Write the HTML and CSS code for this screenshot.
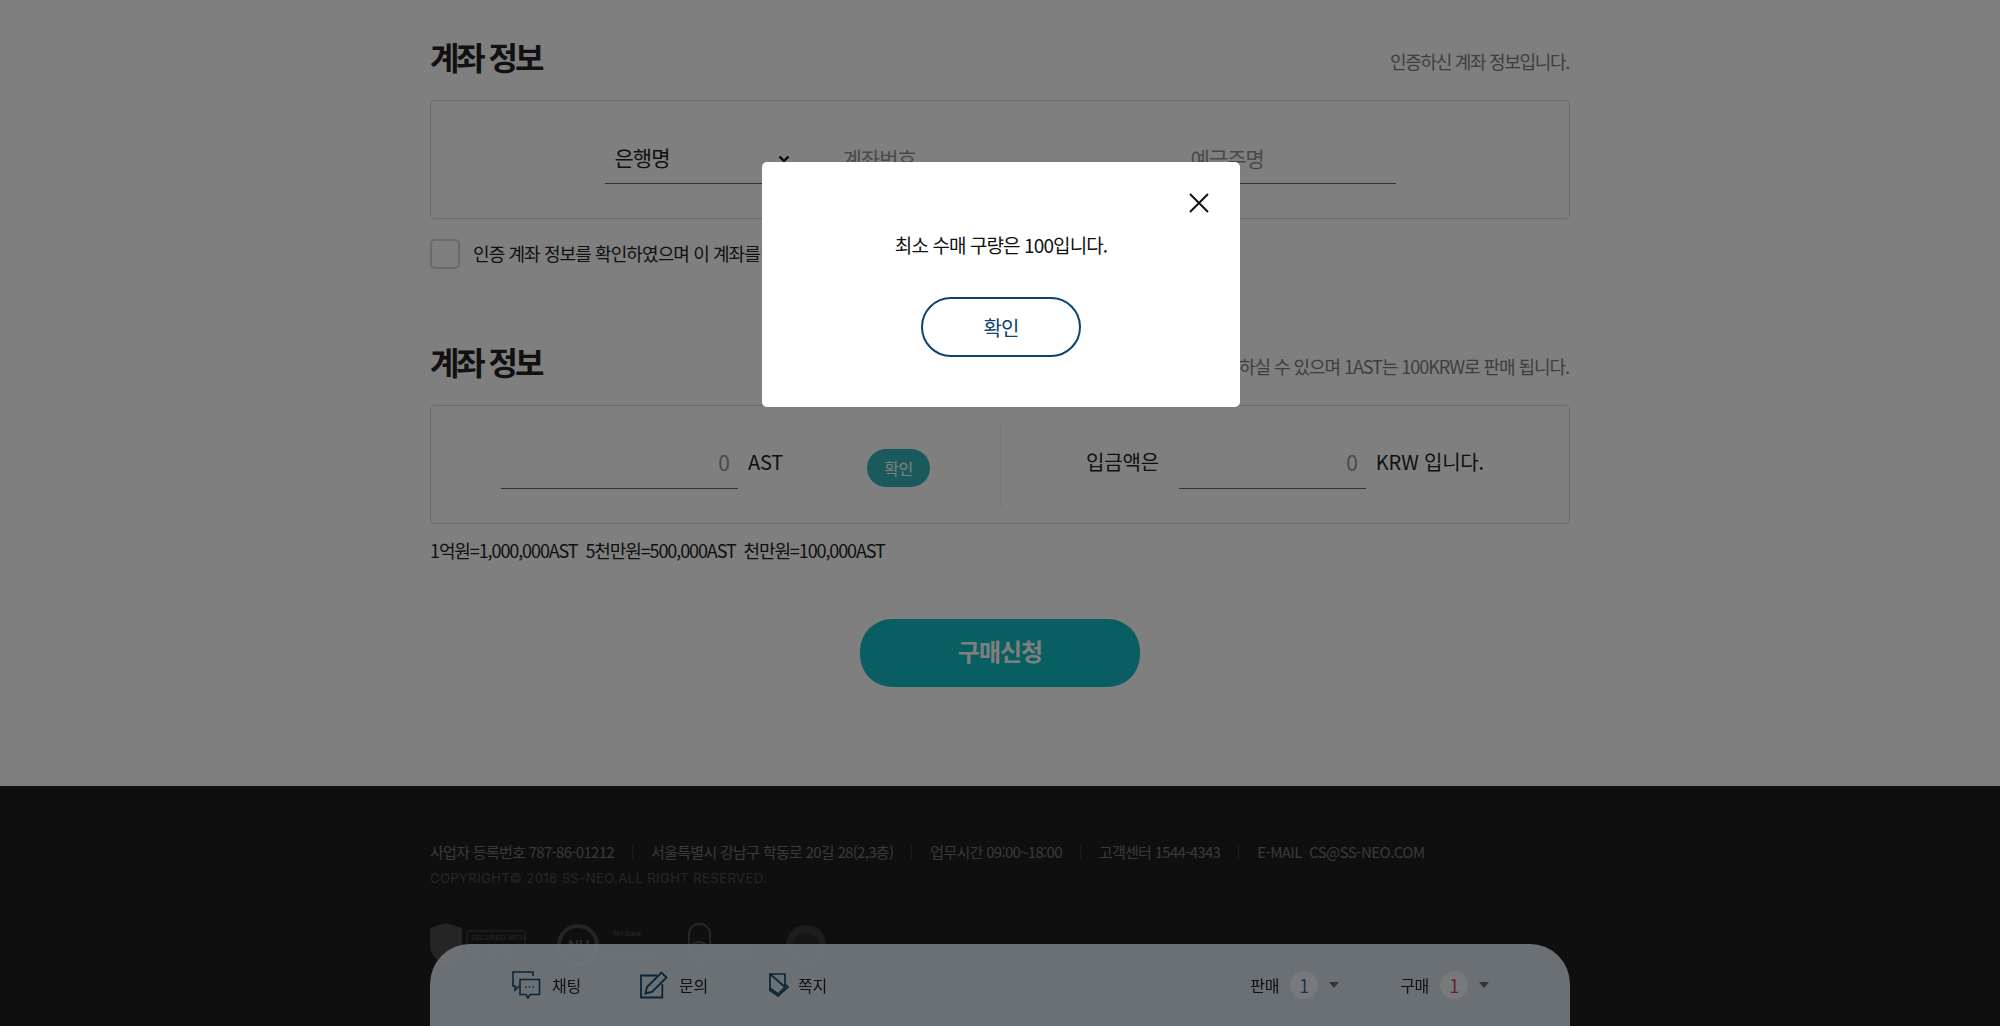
FILE: index.html
```html
<!DOCTYPE html>
<html lang="ko">
<head>
    <meta charset="UTF-8">
    <meta name="viewport" content="width=device-width, initial-scale=1.0">
    <title>계좌 정보</title>
    <link rel="stylesheet" href="styles.css">
</head>
<body>
    <main class="wrap">
        <div class="section-head">
            <h2>계좌 정보</h2>
            <p class="note-first">인증하신 계좌 정보입니다.</p>
        </div>
        <div class="box account-row">
            <select class="bank-select">
                <option>은행명</option>
            </select>
            <input class="field account-no" type="text" placeholder="계좌번호">
            <input class="field account-name" type="text" placeholder="예금주명">
        </div>
        <label class="agree">
            <span class="check"></span>
            <span class="agree-text">인증 계좌 정보를 확인하였으며 이 계좌를 통하여</span>
        </label>

        <div class="section-head second">
            <h2>계좌 정보</h2>
            <p class="note-second">최소 100AST 이상 구매 하실 수 있으며 1AST는 100KRW로 판매 됩니다.</p>
        </div>
        <div class="box amount-row">
            <div class="half left">
                <input class="field amount-ast" type="text" placeholder="0">
                <span class="unit">AST</span>
                <button class="small-btn" type="button">확인</button>
            </div>
            <div class="half right">
                <span class="deposit-label">입금액은</span>
                <input class="field amount-krw" type="text" placeholder="0">
                <span class="unit">KRW 입니다.</span>
            </div>
        </div>
        <p class="rates">1억원=1,000,000AST&nbsp; 5천만원=500,000AST&nbsp; 천만원=100,000AST</p>
        <div class="submit-row">
            <button class="submit-btn" type="button">구매신청</button>
        </div>
    </main>

    <footer class="site-footer">
        <div class="footer-inner">
            <ul class="info">
                <li>사업자 등록번호 787-86-01212</li>
                <li>서울특별시 강남구 학동로 20길 28(2,3층)</li>
                <li>업무시간 09:00~18:00</li>
                <li>고객센터 1544-4343</li>
                <li>E-MAIL&nbsp; CS@SS-NEO.COM</li>
            </ul>
            <p class="copyright">COPYRIGHT© 2018 SS-NEO.ALL RIGHT RESERVED.</p>
            <div class="logos">
                <svg class="logo-bitgo" width="96" height="44" viewBox="0 0 96 44">
                    <path d="M16 0 L32 5 V22 C32 32 24 39 16 43 C8 39 0 32 0 22 V5 Z" fill="#4a4a4a"/>
                    <rect x="37" y="8" width="58" height="30" rx="2" fill="none" stroke="#4a4a4a"/>
                    <text x="41" y="17" class="logo-small">SECURED WITH</text>
                    <text x="41" y="33" class="logo-big">BitGo</text>
                </svg>
                <svg class="logo-nh" width="100" height="44" viewBox="0 0 100 44">
                    <circle cx="21" cy="22" r="19" fill="none" stroke="#4a4a4a" stroke-width="4"/>
                    <text x="11" y="27" class="logo-big">NH</text>
                    <text x="56" y="13" class="logo-small">NH Bank</text>
                    <rect x="47" y="27" width="50" height="10" fill="#3c3c3c"/>
                </svg>
                <svg class="logo-lock" width="66" height="44" viewBox="0 0 66 44">
                    <rect x="1" y="1" width="21" height="30" rx="10" fill="none" stroke="#4a4a4a" stroke-width="2"/>
                    <circle cx="11" cy="30" r="11" fill="none" stroke="#4a4a4a" stroke-width="2"/>
                    <rect x="26" y="24" width="38" height="16" fill="#3c3c3c"/>
                </svg>
                <svg class="logo-seal" width="42" height="44" viewBox="0 0 42 44">
                    <circle cx="21" cy="22" r="20" fill="#3a3a3a"/>
                    <circle cx="21" cy="24" r="14" fill="#2c2c2c"/>
                </svg>
            </div>
        </div>
    </footer>

    <nav class="quick-bar">
        <div class="quick-links">
            <a class="quick-link">
                <svg width="29" height="28" viewBox="0 0 29 28" fill="none" stroke="#164b70" stroke-width="1.6">
                    <path d="M21 5 V1 H1 V15 H3 V19 L7 15"/>
                    <path d="M8 8.5 H27.5 V23.5 H18 L16 27 L14 23.5 H8 Z"/>
                    <path d="M13 16 H14.4 M16.8 16 H18.2 M20.6 16 H22" stroke-width="1.4"/>
                </svg>
                채팅
            </a>
            <a class="quick-link">
                <svg width="28" height="28" viewBox="0 0 28 28" fill="none" stroke="#164b70" stroke-width="1.8">
                    <path d="M17 4.5 H1 V26.5 H22.3 V13"/>
                    <path d="M5.5 22.5 L7 16 L21.5 1.5 L26.5 6.5 L12 21 Z"/>
                </svg>
                문의
            </a>
            <a class="quick-link note-link">
                <svg width="20" height="24" viewBox="0 0 20 24" fill="none" stroke="#164b70" stroke-width="1.7">
                    <path d="M1 1 H16 V14 L9 21 L1 15 Z"/>
                    <path d="M1 1 L16 14"/>
                    <path d="M1 15 L0.5 17 L9 23 L19 14 L16 11"/>
                </svg>
                쪽지
            </a>
        </div>
        <div class="trades">
            <div class="trade"><span>판매</span><b class="count sell">1</b><i class="caret"></i></div>
            <div class="trade"><span>구매</span><b class="count buy">1</b><i class="caret"></i></div>
        </div>
    </nav>

    <div class="dim">
        <div class="modal">
            <button class="modal-close" type="button" aria-label="닫기">
                <svg width="20" height="20" viewBox="0 0 20 20" stroke="#111" stroke-width="2">
                    <path d="M1 1 L19 19 M19 1 L1 19"/>
                </svg>
            </button>
            <p class="modal-text">최소 수매 구량은 100입니다.</p>
            <button class="modal-ok" type="button">확인</button>
        </div>
    </div>
</body>
</html>
```

FILE: styles.css
```css
* {
    box-sizing: border-box;
}
html, body {
    height: 100%;
    overflow: hidden;
}
body {
    margin: 0;
    font-family: "Noto Sans CJK KR", "Noto Sans", sans-serif;
    font-size: 18px;
    color: #222;
    background-color: #fff;
}
button, input, select {
    font-family: inherit;
}
.wrap {
    width: 1140px;
    margin: 0 auto;
    padding-top: 36px;
    padding-bottom: 99px;
}

/* section titles */
.section-head {
    display: flex;
    justify-content: space-between;
    align-items: flex-end;
    height: 44px;
    margin-bottom: 20px;
}
.section-head.second {
    margin-top: 72px;
}
.section-head h2 {
    margin: 0 0 4px;
    font-size: 32px;
    line-height: 40px;
    font-weight: 700;
    letter-spacing: -3.1px;
}
.section-head p {
    margin: 0 1px 6px 0;
    font-size: 18px;
    line-height: 26px;
    color: #7c7c7c;
    white-space: nowrap;
}
.note-first {
    letter-spacing: -1.3px;
}
.note-second {
    letter-spacing: -1.05px;
}
.box {
    height: 119px;
    border: 1px solid #d6d6d6;
    border-radius: 5px;
}

/* account row */
.account-row {
    display: flex;
    justify-content: center;
    align-items: center;
}
.field {
    height: 49px;
    padding: 0 10px 3px;
    border: none;
    border-bottom: 1px solid #666;
    border-radius: 0;
    background: none;
    font-size: 21px;
    color: #222;
    outline: none;
    letter-spacing: -1px;
}
.field::placeholder {
    color: #949494;
}
.bank-select {
    width: 190px;
    height: 49px;
    margin-right: 38px;
    padding: 0 9px 4px 10px;
    border: none;
    border-bottom: 1px solid #666;
    border-radius: 0;
    appearance: none;
    background: url("data:image/svg+xml,%3Csvg xmlns='http://www.w3.org/2000/svg' width='12' height='8' viewBox='0 0 12 8'%3E%3Cpath d='M1.5 1.5 L6 6 L10.5 1.5' fill='none' stroke='%23111' stroke-width='2.4'/%3E%3C/svg%3E") no-repeat right 5px center;
    font-size: 21px;
    color: #222;
    letter-spacing: -1px;
}
.account-no {
    width: 337px;
    margin-right: 11px;
}
.account-name {
    width: 215px;
}
.agree {
    display: flex;
    align-items: center;
    margin-top: 20px;
    height: 30px;
    letter-spacing: -0.9px;
    line-height: 30px;
    white-space: nowrap;
}
.agree-text {
    margin-top: -2px;
}
.check {
    width: 30px;
    height: 30px;
    margin-right: 13px;
    border: 2px solid #d4d4d4;
    border-radius: 5px;
}

/* amount row */
.amount-row {
    display: grid;
    grid-template-columns: 570px 1fr;
    align-items: center;
}
.half {
    display: flex;
    align-items: center;
    height: 85px;
}
.half.left {
    padding: 0 70px;
    border-right: 1px solid #ececec;
}
.half.right {
    justify-content: center;
}
.amount-row .field {
    text-align: right;
    padding-right: 9px;
    padding-bottom: 5px;
}
.amount-ast {
    width: 237px;
}
.amount-krw {
    width: 187px;
}
.unit,
.deposit-label {
    margin-top: -2px;
    padding-bottom: 5px;
    font-size: 20px;
    letter-spacing: -0.2px;
}
.unit {
    margin-left: 10px;
}
.deposit-label {
    margin-right: 20px;
}
.small-btn {
    width: 63px;
    height: 38px;
    margin-left: auto;
    margin-top: 7px;
    padding: 0;
    border: none;
    border-radius: 19px;
    background-color: #35b4b8;
    color: #fff;
    font-size: 16px;
    letter-spacing: -0.5px;
}
.rates {
    margin: 13px 0 0;
    line-height: 27px;
    letter-spacing: -1.1px;
    white-space: nowrap;
}
.submit-row {
    display: flex;
    justify-content: center;
    margin-top: 55px;
}
.submit-btn {
    width: 280px;
    height: 68px;
    padding: 0 0 5px;
    border: none;
    border-radius: 32px;
    background-color: #10bcc0;
    color: #fff;
    font-size: 24px;
    font-weight: 700;
    letter-spacing: -1px;
}

/* footer */
.site-footer {
    height: 240px;
    background-color: #1e1e1e;
    padding-top: 56px;
    overflow: hidden;
}
.footer-inner {
    width: 1140px;
    margin: 0 auto;
}
.info {
    display: flex;
    margin: 0;
    padding: 0;
    list-style: none;
    font-size: 15px;
    line-height: 20px;
    color: #747474;
    letter-spacing: -0.7px;
}
.info li {
    padding-right: 18px;
    margin-right: 18px;
    border-right: 1px solid #3c3c3c;
    height: 14px;
    line-height: 14px;
    margin-top: 3px;
}
.info li:last-child {
    border-right: none;
    letter-spacing: -0.55px;
}
.copyright {
    margin: 9px 0 0;
    font-family: "Inter", sans-serif;
    font-size: 13px;
    line-height: 20px;
    color: #4e4e4e;
    letter-spacing: 0.45px;
}
.logos {
    display: flex;
    gap: 31px;
    margin-top: 35px;
}
.logo-small {
    font-family: "Liberation Sans", sans-serif;
    font-size: 7px;
    fill: #555;
}
.logo-big {
    font-family: "Liberation Sans", sans-serif;
    font-size: 15px;
    font-weight: 700;
    fill: #555;
}

/* quick bar fixed on the bottom */
.quick-bar {
    position: fixed;
    left: 430px;
    bottom: 0;
    width: 1140px;
    height: 82px;
    display: flex;
    justify-content: space-between;
    padding: 27px 81px 0 82px;
    border-radius: 40px 40px 0 0;
    background-color: rgba(232, 245, 252, 0.9);
}
.quick-links {
    display: flex;
    gap: 59px;
}
.quick-link {
    display: flex;
    align-items: center;
    gap: 11px;
    height: 28px;
    font-size: 16px;
    letter-spacing: -0.2px;
    color: #222;
}
.quick-link.note-link {
    gap: 9px;
    margin-left: 2px;
}
.trades {
    display: flex;
    gap: 61px;
}
.trade {
    display: flex;
    align-items: center;
    height: 28px;
    font-size: 16px;
    letter-spacing: -0.3px;
}
.count {
    width: 28px;
    height: 28px;
    margin-left: 11px;
    border-radius: 50%;
    background-color: #f0f3f5;
    text-align: center;
    font-size: 18px;
    font-weight: 400;
    line-height: 28px;
}
.count.sell {
    color: #3a5fb0;
}
.count.buy {
    color: #d0345c;
}
.caret {
    width: 0;
    height: 0;
    margin-left: 11px;
    border-left: 5px solid transparent;
    border-right: 5px solid transparent;
    border-top: 6px solid #666;
}

/* modal */
.dim {
    position: fixed;
    top: 0;
    left: 0;
    right: 0;
    bottom: 0;
    display: flex;
    justify-content: center;
    align-items: flex-start;
    padding-top: 162px;
    background-color: rgba(0, 0, 0, 0.5);
}
.modal {
    position: relative;
    width: 478px;
    height: 245px;
    margin-left: 2px;
    border-radius: 5px;
    background-color: #fff;
    text-align: center;
}
.modal-close {
    position: absolute;
    top: 31px;
    right: 31px;
    width: 20px;
    height: 20px;
    padding: 0;
    border: none;
    background: none;
    line-height: 0;
}
.modal-text {
    margin: 0;
    padding-top: 70px;
    font-size: 19px;
    line-height: 26px;
    color: #111;
    letter-spacing: -0.9px;
}
.modal-ok {
    width: 160px;
    height: 60px;
    margin-top: 39px;
    border: 2px solid #0c4370;
    border-radius: 30px;
    background: #fff;
    color: #0c4370;
    font-size: 20px;
    letter-spacing: -1px;
}
```
